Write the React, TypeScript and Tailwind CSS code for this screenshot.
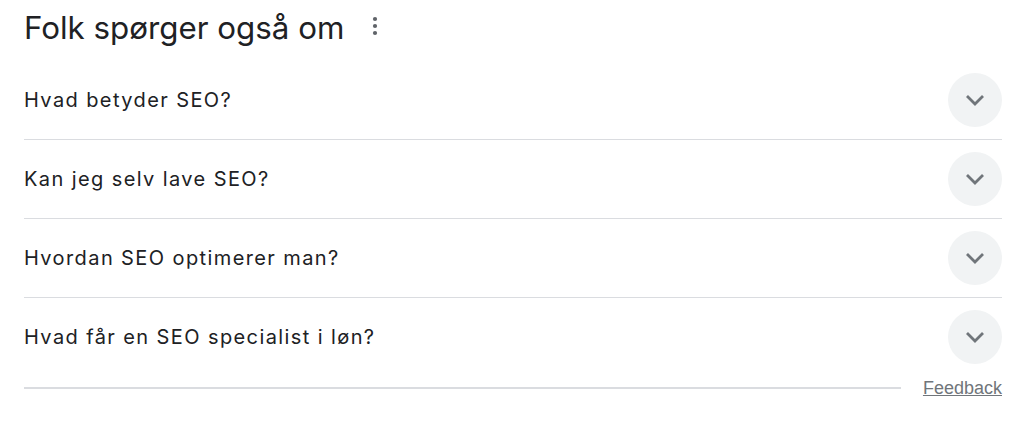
import React from "react";

const questions = [
  "Hvad betyder SEO?",
  "Kan jeg selv lave SEO?",
  "Hvordan SEO optimerer man?",
  "Hvad får en SEO specialist i løn?",
];

const Chevron: React.FC = () => (
  <svg width="20" height="12" viewBox="0 0 20 12" fill="none">
    <polyline points="2,2 10,10 18,2" stroke="#70757a" strokeWidth="2.8" />
  </svg>
);

const MoreDots: React.FC = () => (
  <svg width="24" height="24" viewBox="0 0 24 24" fill="#5f6368">
    <circle cx="12" cy="5" r="2.1" />
    <circle cx="12" cy="12" r="2.1" />
    <circle cx="12" cy="19" r="2.1" />
  </svg>
);

export default function App() {
  return (
    <div className="w-[1036px] h-[424px] bg-white pl-6 pr-[34px] font-['Inter',sans-serif] text-[#202124]">
      <div className="flex h-[61px] items-start pt-[10px]">
        <h2 className="text-[31.3px] leading-[36px] font-normal">Folk spørger også om</h2>
        <div className="ml-[19px] mt-[4px]">
          <MoreDots />
        </div>
      </div>

      <div>
        {questions.map((q, i) => (
          <div
            key={q}
            className={
              i < questions.length - 1
                ? "flex h-[79px] items-center justify-between border-b border-[#dadce0]"
                : "flex h-[78px] items-center justify-between"
            }
          >
            <span className="text-[20px] leading-[26px] tracking-[0.07em]">{q}</span>
            <div className="-mt-px flex h-[54px] w-[54px] items-center justify-center rounded-full bg-[#f1f3f4]">
              <Chevron />
            </div>
          </div>
        ))}
      </div>

      <div className="flex h-6 items-center">
        <div className="h-[2px] flex-1 bg-[#dadce0]" />
        <a
          href="#"
          className="ml-[22px] font-['Liberation_Sans',Arial,sans-serif] text-[18px] leading-6 text-[#70757a] underline"
        >
          Feedback
        </a>
      </div>
    </div>
  );
}
